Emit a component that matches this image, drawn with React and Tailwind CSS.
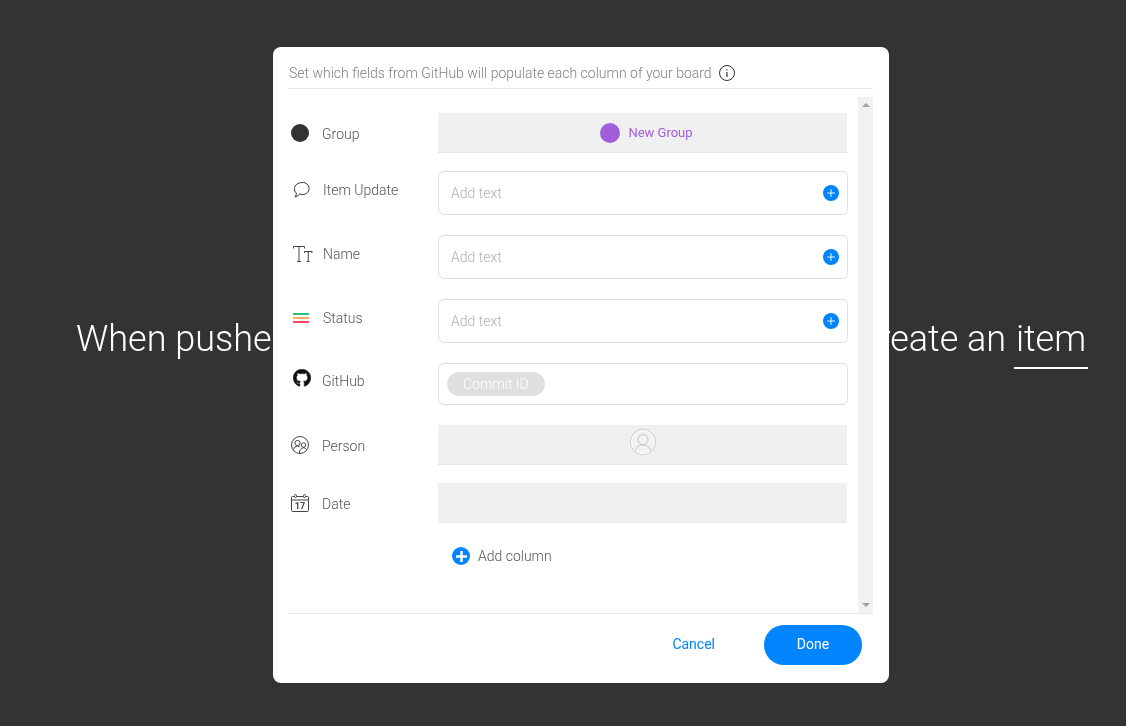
import { FaGithub } from 'react-icons/fa';

const font = { fontFamily: 'Roboto' };

const GroupIcon = () => <span className="block w-[18px] h-[18px] rounded-full bg-[#333333]" />;

const UpdateIcon = () => (
  <svg width="18" height="16" viewBox="0 0 18 16" fill="none" stroke="#333" strokeWidth="1">
    <path d="M9.500 .5c3.800 0 6.500 2.500 6.500 6s-2.700 6-6.500 6c-1 0-2-.2-2.800-.5-1.200 1.300-2.700 2.500-4.700 3 .8-1 1.300-2.300 1.400-3.900C1.900 10.300 1.500 8.500 1.500 6.500c0-3.500 3.700-6 8-6z" />
  </svg>
);

const NameIcon = () => (
  <svg width="20" height="18" viewBox="0 0 20 18" fill="none" stroke="#444" strokeWidth="1">
    <path d="M.5 3.500V1.500h11v2M6 1.500v15M4 16.500h4" />
    <path d="M11.500 8V6.500h7.500V8M15.200 6.500v10M13.700 16.500h3" />
  </svg>
);

const StatusIcon = () => (
  <span className="flex flex-col gap-[2px] w-4">
    <span className="block h-[2px] bg-[#1fc77e]" />
    <span className="block h-[2px] bg-[#f6b25e]" />
    <span className="block h-[2px] bg-[#f8485e]" />
  </span>
);

const PersonIcon = () => (
  <svg width="18" height="18" viewBox="0 0 18 18" fill="none" stroke="#444" strokeWidth="1">
    <circle cx="9" cy="9" r="8.500" />
    <circle cx="6.500" cy="7" r="2.600" />
    <circle cx="12.500" cy="9" r="2.200" />
    <path d="M2.500 13.500c.6-2 2-3.300 4-3.300 1 0 1.700.2 2.400.7M8.500 17c0-2.800 1.500-5.200 4-5.200 1.300 0 2.300.6 3 1.500" />
  </svg>
);

const DateIcon = () => (
  <svg width="18" height="18" viewBox="0 0 18 18" fill="none" stroke="#444" strokeWidth="1">
    <rect x=".5" y="2.500" width="17" height="15" rx="1" />
    <path d="M.5 6h17" />
    <rect x="3.500" y=".5" width="2" height="3" rx="1" fill="#fff" />
    <rect x="12.500" y=".5" width="2" height="3" rx="1" fill="#fff" />
    <text x="9" y="15" textAnchor="middle" fontFamily="Roboto" fontSize="9" fontWeight="700" fill="#444" stroke="none">17</text>
  </svg>
);

const BlueDot = () => (
  <span className="flex items-center justify-center w-4 h-4 rounded-full bg-[#0085ff]">
    <svg width="8" height="8" viewBox="0 0 8 8" stroke="#fff" strokeWidth=".9"><path d="M4 0v8M0 4h8" /></svg>
  </span>
);

const TextField = () => (
  <div className="flex items-center justify-between w-[410px] h-11 pl-3 pr-[8px] bg-white border border-[#dedede] rounded-md">
    <span className="text-sm font-light text-[#b0b0b0]">Add text</span>
    <BlueDot />
  </div>
);

const GrayField = ({ children }) => (
  <div className="flex justify-center w-[409px] h-10 bg-[#f0f0f0] border-b border-[#e6e6ee]">{children}</div>
);

const Row = ({ icon, label, labelTop, iconLeft, textLeft, iconTop, className, children }) => (
  <div className={`flex items-start ${className}`}>
    <div className={`relative flex w-[149px] shrink-0 ${labelTop}`}>
      <span className={`flex items-center h-5 w-[33px] shrink-0 ${iconLeft} ${iconTop}`}>{icon}</span>
      <span className={`text-sm font-light leading-5 text-[#555555] ${textLeft}`}>{label}</span>
    </div>
    {children}
  </div>
);

export default function App() {
  return (
    <div style={font} className="relative flex items-center w-[1126px] h-[726px] overflow-hidden bg-[#333333] pl-[76px] pb-10 will-change-transform">
      <h1 className="whitespace-nowrap text-[36px] font-light leading-[44px] text-white">
        <span className="mr-[11px]">When pushes are made in this GitHub repository,</span> create an <span className="inline-block -ml-[1px] px-[2px] border-b-2 border-white pb-[6px] leading-[44px]">item</span>
      </h1>

      <div className="absolute left-[273px] top-[47px] flex flex-col w-[616px] h-[636px] px-4 bg-white rounded-lg">
        <div className="flex items-center h-[42px] pt-[10px] border-b border-[#e8e8ee] shrink-0">
          <span className="text-sm font-light text-[#808080]">Set which fields from GitHub will populate each column of your board</span>
          <svg className="ml-[7px]" width="16" height="16" viewBox="0 0 16 16" fill="none" stroke="#333" strokeWidth="1">
            <circle cx="8" cy="8" r="7.500" />
            <path d="M8 7v5" strokeWidth="1.200" />
            <path d="M8 4.200v1.300" strokeWidth="1.200" />
          </svg>
        </div>

        <div className="flex flex-1 min-h-0">
          <div className="w-[569px] pt-6 shrink-0">
            <Row icon={<GroupIcon />} label="Group" labelTop="pt-[11px]" iconTop="-mt-[1px]" iconLeft="pl-[2px]" className="mb-[18px]">
              <GrayField>
                <div className="flex items-center gap-2 ml-2">
                  <span className="w-5 h-5 rounded-full bg-[#a25ddc]" />
                  <span className="text-[13px] text-[#a25ddc]">New Group</span>
                </div>
              </GrayField>
            </Row>
            <Row icon={<UpdateIcon />} label="Item Update" labelTop="pt-[9px]" iconTop="" iconLeft="pl-[4px]" textLeft="pl-[1px]" className="mb-5">
              <TextField />
            </Row>
            <Row icon={<NameIcon />} label="Name" labelTop="pt-[9px]" iconTop="" iconLeft="pl-[4px]" textLeft="pl-[1px]" className="mb-5">
              <TextField />
            </Row>
            <Row icon={<StatusIcon />} label="Status" labelTop="pt-[9px]" iconLeft="pl-[4px]" textLeft="pl-[1px]" className="mb-5">
              <TextField />
            </Row>
            <Row icon={<FaGithub size={18} color="#111" stroke="#111" strokeWidth={16} />} label="GitHub" labelTop="pt-[8px]" iconTop="-mt-[3px]" iconLeft="pl-[4px]" className="mb-5">
              <div className="flex items-center w-[410px] h-[42px] pl-2 bg-white border border-[#dedede] rounded-md">
                <span className="flex items-center h-6 px-4 rounded-full bg-[#dfdfdf] text-sm font-light text-white">Commit ID</span>
              </div>
            </Row>
            <Row icon={<PersonIcon />} label="Person" labelTop="pt-[11px]" iconTop="-mt-[1px]" iconLeft="pl-[2px]" className="mb-[18px]">
              <GrayField>
                <svg className="mt-[4px]" width="26" height="26" viewBox="0 0 26 26" fill="none" stroke="#c4c4cc" strokeWidth="1">
                  <circle cx="13" cy="13" r="12.500" fill="#fafafa" />
                  <circle cx="13" cy="13" r="11.500" fill="#f2f2f2" stroke="#fff" />
                  <circle cx="13" cy="10.500" r="5" />
                  <path d="M5 21.500c1.200-3.500 4-5.500 8-5.500s6.800 2 8 5.500" />
                </svg>
              </GrayField>
            </Row>
            <Row icon={<DateIcon />} label="Date" labelTop="pt-[11px]" iconTop="-mt-[1px]" iconLeft="pl-[2px]" className="mb-6">
              <GrayField />
            </Row>
            <div className="flex items-center pl-[163px] h-[18px]">
              <span className="flex items-center justify-center w-[18px] h-[18px] rounded-full bg-[#0085ff]">
                <svg width="11" height="11" viewBox="0 0 11 11" stroke="#fff" strokeWidth="2.500"><path d="M5.500 0v11M0 5.500h11" /></svg>
              </span>
              <span className="ml-2 text-sm font-light text-[#555555]">Add column</span>
            </div>
          </div>
          <div className="flex flex-col justify-between items-center w-[15px] mt-2 pt-[6px] pb-[6px] bg-[#f1f1f1]">
            <span className="w-0 h-0 border-x-[4px] border-x-transparent border-b-[4px] border-b-[#a3a3a3]" />
            <span className="w-0 h-0 border-x-[4px] border-x-transparent border-t-[4px] border-t-[#a3a3a3]" />
          </div>
        </div>

        <div className="flex items-center justify-end h-[70px] pb-[8px] pr-[11px] border-t border-[#e8e8e8] shrink-0">
          <button className="mr-[49px] pb-[2px] text-sm text-[#0085ff]">Cancel</button>
          <button className="w-[98px] h-10 pb-[2px] rounded-full bg-[#0085ff] text-sm text-white">Done</button>
        </div>
      </div>
    </div>
  );
}
